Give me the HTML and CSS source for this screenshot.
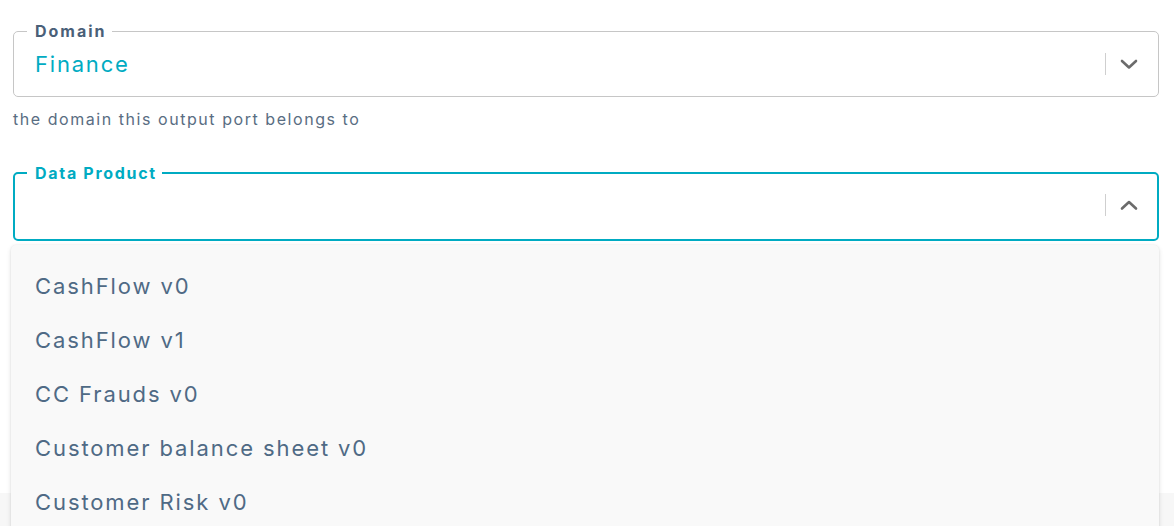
FILE: index.html
```html
<!DOCTYPE html>
<html>
<head>
<meta charset="utf-8">
<link rel="stylesheet" href="styles.css">
</head>
<body>
<div class="page">
  <div class="form">
    <div class="field">
      <fieldset class="box">
        <legend class="label">Domain</legend>
        <div class="row">
          <span class="value">Finance</span>
          <span class="sep"></span>
          <svg class="chev" width="18" height="12" viewBox="0 0 18 12"><path d="M2 3 L9 9.5 L16 3" fill="none" stroke="#6b6b6b" stroke-width="2.6" stroke-linecap="round" stroke-linejoin="round"/></svg>
        </div>
      </fieldset>
      <p class="helper">the domain this output port belongs to</p>
    </div>
    <div class="field open">
      <fieldset class="box focus">
        <legend class="label">Data Product</legend>
        <div class="row">
          <span class="value"></span>
          <span class="sep"></span>
          <svg class="chev" width="18" height="12" viewBox="0 0 18 12"><path d="M2 9.5 L9 3 L16 9.5" fill="none" stroke="#6b6b6b" stroke-width="2.6" stroke-linecap="round" stroke-linejoin="round"/></svg>
        </div>
      </fieldset>
      <ul class="menu">
        <li>CashFlow v0</li>
        <li>CashFlow v1</li>
        <li>CC Frauds v0</li>
        <li>Customer balance sheet v0</li>
        <li>Customer Risk v0</li>
      </ul>
    </div>
  </div>
  <div class="footer"></div>
</div>
</body>
</html>
```
FILE: styles.css
```css
* { box-sizing: border-box; }
html, body { margin: 0; padding: 0; background: #fff; }
body { font-family: "Inter", "Open Sans", sans-serif; color: #4d6680; }
.page { width: 1174px; height: 526px; overflow: hidden; display: flex; flex-direction: column; }
.form { padding: 21px 15px 0 13px; height: 493px; }
.field { position: relative; }
.box {
  margin: 0; padding: 0;
  border: 1px solid #c6c6c6; border-radius: 5px;
  height: 76px;
}
.box.focus { border: 2px solid #00abc2; height: 78px; }
.label {
  margin-left: 13px; padding: 0 5px 0 8px;
  font-size: 16px; font-weight: 700; color: #4a6078;
  line-height: 20px; letter-spacing: 2px;
}
.focus .label { margin-left: 12px; color: #00abc2; letter-spacing: 1.7px; }
.row { display: flex; align-items: center; height: 46px; margin-top: 0; padding: 0 20px 0 21px; }
.focus .row { padding: 0 19px 0 20px; margin-top: -1px; }
.value { flex: 1; font-size: 22px; color: #00abc2; letter-spacing: 1.8px; }
.sep { width: 1px; height: 22px; background: #cfcfcf; margin-right: 14px; }
.chev { display: block; }
.helper { margin: 11px 0 0 0; font-size: 16px; color: #596d82; line-height: 22px; letter-spacing: 1.55px; }
.open { margin-top: 33px; }
.menu {
  position: absolute; left: -2px; right: 0; top: 82px;
  margin: 0; padding: 14px 0 0 0; list-style: none;
  background: #f9f9f9; border-radius: 5px;
  box-shadow: 0 2px 5px rgba(0,0,0,0.12), 0 0 2px rgba(0,0,0,0.08);
  height: 300px; z-index: 2;
}
.menu li { height: 54px; line-height: 54px; padding-left: 24px; font-size: 22px; color: #4f6a85; letter-spacing: 1.9px; }
.footer { flex: 1; background: #f7f7f7; }
```
